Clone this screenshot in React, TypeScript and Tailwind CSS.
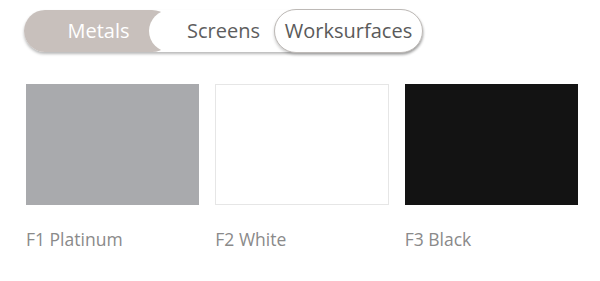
const finishes = [
  { code: "F1", name: "Platinum", swatch: "bg-[#a9aaad]" },
  { code: "F2", name: "White", swatch: "bg-white border border-[#e6e6e6]" },
  { code: "F3", name: "Black", swatch: "bg-[#131313]" },
];

export default function App() {
  return (
    <div className="h-[281px] w-[600px] bg-white font-['Open_Sans',sans-serif]">
      {/* Tabs */}
      <div className="pl-[24px] pt-[10px]">
        <div className="inline-flex h-[42px] rounded-full shadow-[0_2px_3px_rgba(0,0,0,0.28)]">
          <button className="flex h-[42px] w-[149px] items-center justify-center rounded-full bg-[#c8c0bc] text-[20px] text-white">
            Metals
          </button>
          <button className="relative -ml-[24px] flex h-[42px] w-[149px] items-center justify-center rounded-full bg-white text-[20px] text-[#5e5e5e]">
            Screens
          </button>
          <button className="relative -ml-[24px] -mt-[1px] flex h-[44px] w-[149px] items-center justify-center rounded-full border border-[#bdb9b6] bg-white text-[20px] text-[#5a5a5a] shadow-[0_2px_3px_rgba(0,0,0,0.2)]">
            Worksurfaces
          </button>
        </div>
      </div>

      {/* Swatches */}
      <div className="mt-[32px] grid grid-cols-3 gap-[16px] pl-[26px] pr-[22px]">
        {finishes.map((f) => (
          <div key={f.code}>
            <div className={`h-[121px] w-full ${f.swatch}`} />
            <p className="mt-[22px] text-[17.5px] leading-[24px] text-[#8a8a8a]">
              {f.code} {f.name}
            </p>
          </div>
        ))}
      </div>
    </div>
  );
}
